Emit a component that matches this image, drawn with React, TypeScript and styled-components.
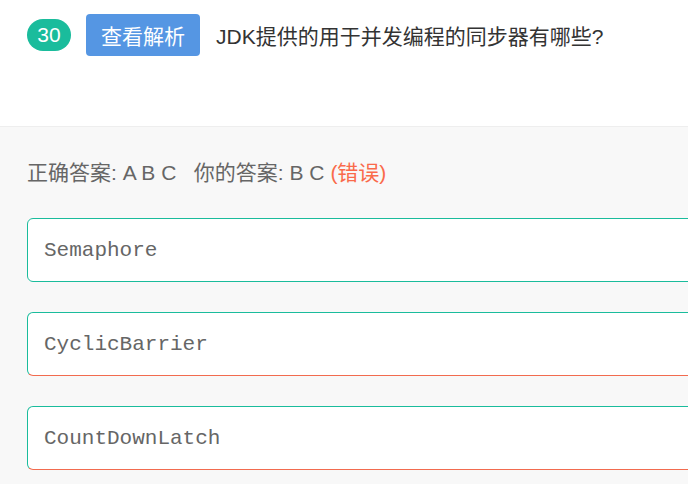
import React from "react";
import styled, { createGlobalStyle } from "styled-components";

const Global = createGlobalStyle`
  html, body { margin: 0; padding: 0; background: #fff; overflow: hidden; }
  body { font-family: "Liberation Sans", "Noto Sans CJK SC", sans-serif; }
`;

const Page = styled.div`
  width: 688px;
  height: 484px;
  overflow: hidden;
  display: flex;
  flex-direction: column;
`;

const Header = styled.div`
  height: 126px;
  box-sizing: border-box;
  padding: 14px 0 0 27px;
  display: flex;
  align-items: flex-start;
`;

const HeaderRow = styled.div`
  display: flex;
  align-items: center;
  height: 42px;
`;

const Badge = styled.span`
  width: 44px;
  height: 32px;
  border-radius: 16px;
  background: #1abc9c;
  color: #fff;
  font-size: 21px;
  line-height: 32px;
  text-align: center;
  margin-right: 15px;
`;

const ExplainButton = styled.button`
  width: 114px;
  height: 42px;
  border: none;
  border-radius: 4px;
  background: #5596e3;
  color: #fff;
  font-family: "Liberation Sans", "Noto Sans CJK SC", sans-serif;
  font-size: 21px;
  padding: 0;
  margin-right: 16px;
  cursor: pointer;
`;

const Question = styled.span`
  font-size: 21px;
  color: #333;
`;

const Body = styled.div`
  flex: 1;
  background: #f8f8f8;
  border-top: 1px solid #eeeeee;
  padding: 32px 0 0 27px;
  display: flex;
  flex-direction: column;
`;

const AnswerLine = styled.div`
  font-size: 21px;
  line-height: 28px;
  color: #666;
  margin-bottom: 31px;
  white-space: pre;
`;

const Wrong = styled.span`
  color: #fa6a4b;
`;

const Options = styled.div`
  display: flex;
  flex-direction: column;
  gap: 30px;
`;

const Option = styled.div<{ $bottom: string }>`
  width: 700px;
  height: 64px;
  box-sizing: border-box;
  border: 1px solid #1abc9c;
  border-bottom-color: ${(p) => p.$bottom};
  border-radius: 6px;
  background: #fff;
  display: flex;
  align-items: center;
  padding-left: 16px;
  font-family: "Liberation Mono", monospace;
  font-size: 21px;
  color: #666;
`;

const GREEN = "#1abc9c";
const RED = "#f26b4f";

const options = [
  { text: "Semaphore", bottom: GREEN },
  { text: "CyclicBarrier", bottom: RED },
  { text: "CountDownLatch", bottom: RED },
];

export default function App() {
  return (
    <Page>
      <Global />
      <Header>
        <HeaderRow>
          <Badge>30</Badge>
          <ExplainButton>查看解析</ExplainButton>
          <Question>JDK提供的用于并发编程的同步器有哪些?</Question>
        </HeaderRow>
      </Header>
      <Body>
        <AnswerLine>
          {"正确答案: A B C   你的答案: B C "}
          <Wrong>(错误)</Wrong>
        </AnswerLine>
        <Options>
          {options.map((o) => (
            <Option key={o.text} $bottom={o.bottom}>
              {o.text}
            </Option>
          ))}
        </Options>
      </Body>
    </Page>
  );
}
